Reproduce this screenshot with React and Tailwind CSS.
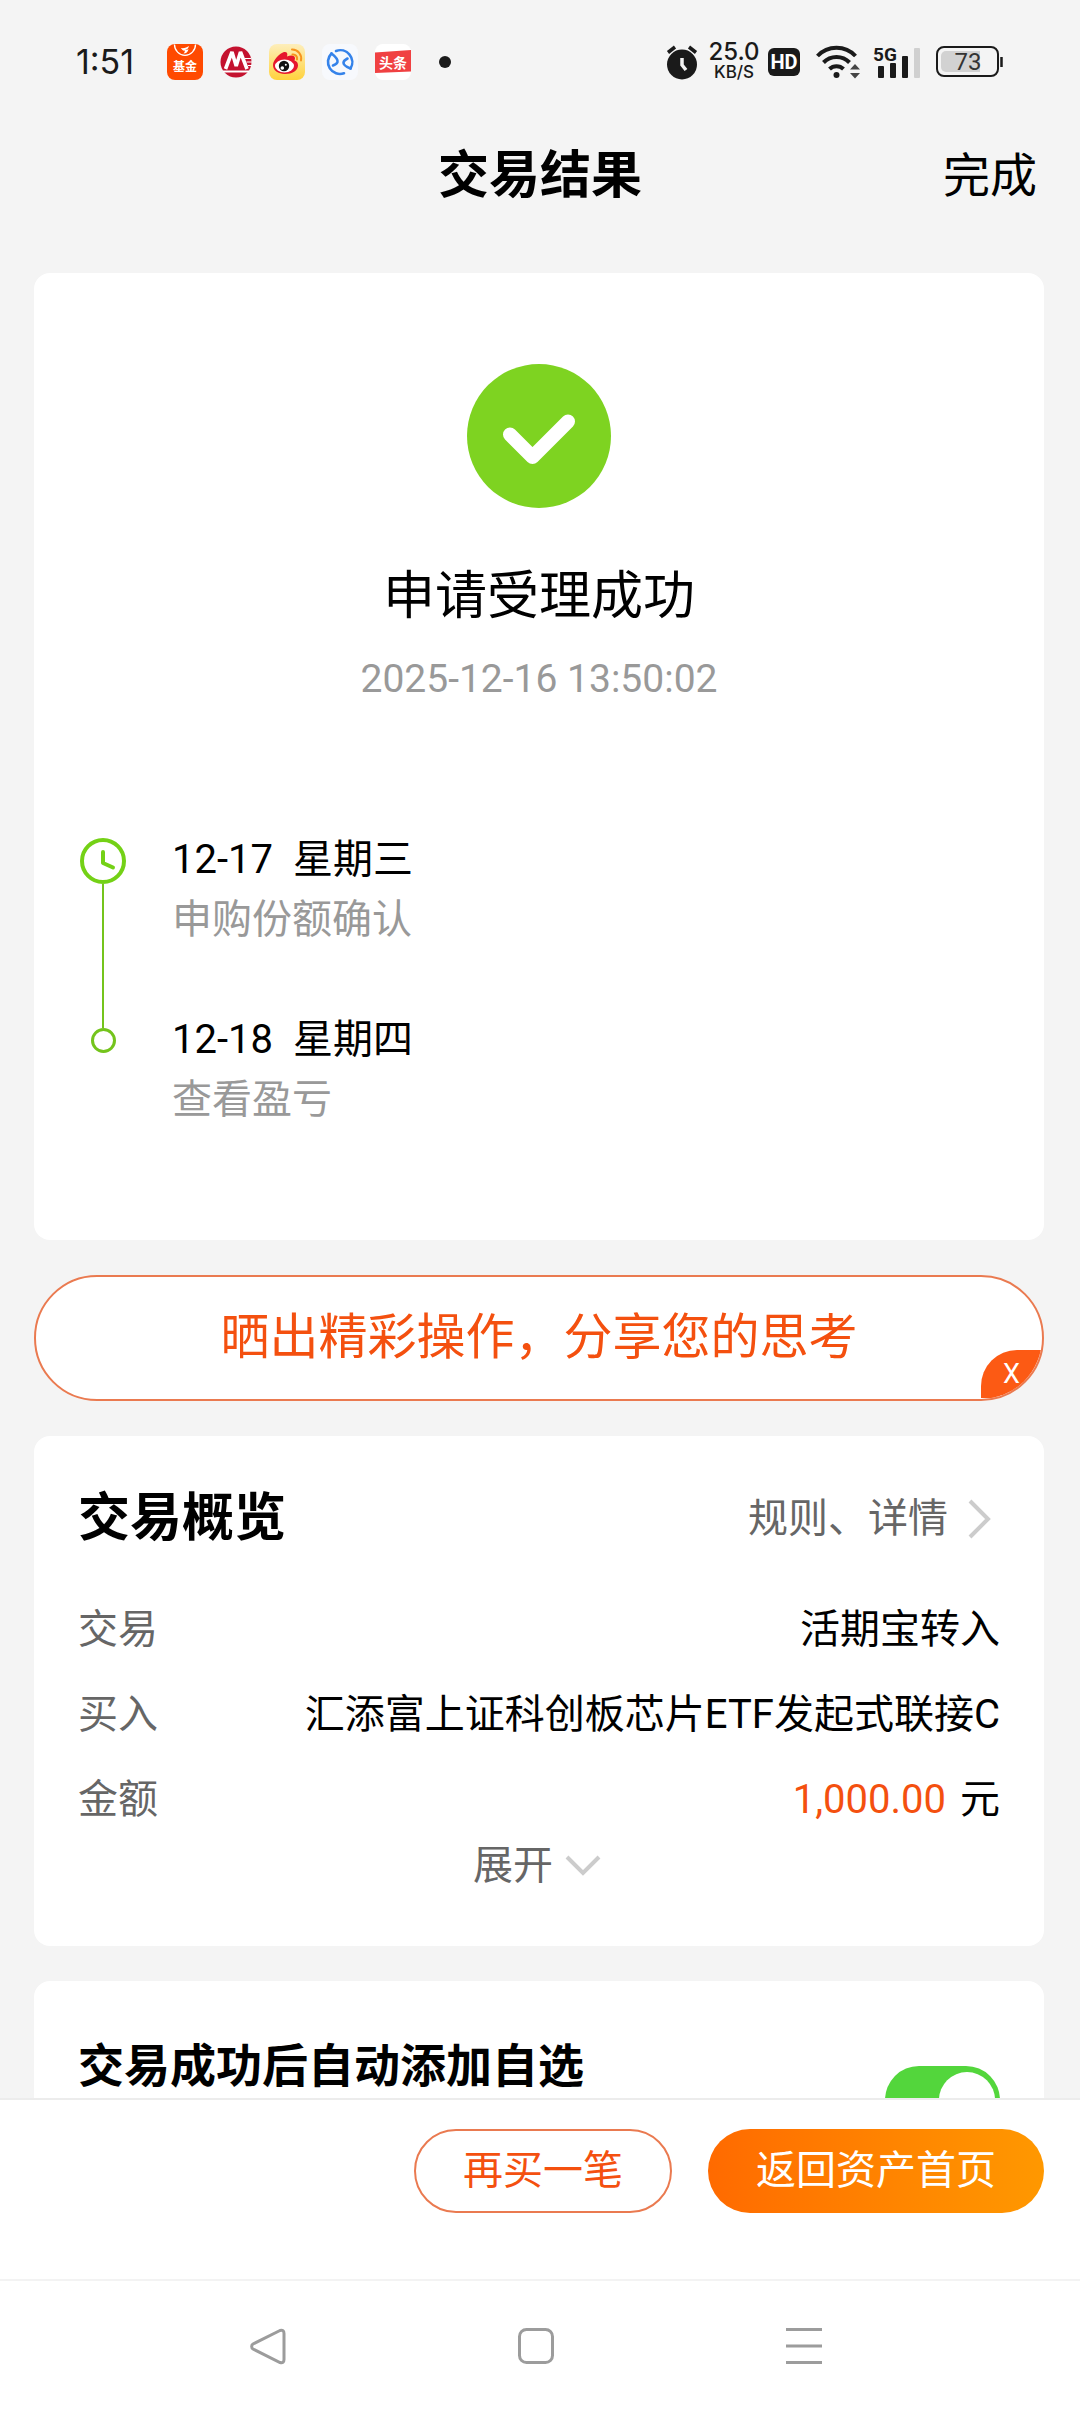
import { useState } from "react"

const FONT = "font-[Roboto,'Noto_Sans_CJK_SC',sans-serif]"

const steps = [
  { date: "12-17", weekday: "星期三", text: "申购份额确认" },
  { date: "12-18", weekday: "星期四", text: "查看盈亏" },
]

function FundAppIcon() {
  return (
    <svg className="size-9" viewBox="0 0 36 36">
      <rect width="36" height="36" rx="8" fill="#ff4a00" />
      <path d="M7.500 0.500a10.500 10.800 0 0 0 21 0" fill="none" stroke="#fff" strokeWidth="1.300" />
      <path d="M14 4c3 .5 6-.5 8-2-.5 2.500-2 3.500-4 4 2 0 3-.5 3.500-1-.5 3-2.500 4.500-5 4.500 1-1 1.500-2 1.500-3-1.500.5-3-.5-4-2.500z" fill="#fff" />
      <text x="18" y="27" textAnchor="middle" fontSize="12" fontWeight="700" fill="#fff">基金</text>
    </svg>
  )
}

function BankIcon() {
  return (
    <svg className="size-8" viewBox="0 0 32 32">
      <circle cx="16" cy="16" r="15.500" fill="#c4122f" />
      <path d="M5.500 23 12 6l4.200 14L20.500 6 27 23" fill="none" stroke="#fff" strokeWidth="3.600" strokeLinejoin="bevel" />
      <path d="M25 12.500h6M26.500 16h6M28 19.500h4" stroke="#fff" strokeWidth="1.200" />
      <path d="M3 25.500h26" stroke="#fff" strokeWidth="2" />
    </svg>
  )
}

function WeiboIcon() {
  return (
    <svg className="size-9" viewBox="0 0 36 36">
      <defs>
        <linearGradient id="weibo" x1="0" y1="0" x2="0" y2="1">
          <stop offset="0" stopColor="#fdeebb" />
          <stop offset="1" stopColor="#ffd23c" />
        </linearGradient>
      </defs>
      <rect width="36" height="36" rx="8" fill="url(#weibo)" />
      <path d="M4 21c0-5 7-12 11-13 3-.5 4 1.500 3 4.500 4-1.500 8-1.500 8 2l-.5 2c2.500.8 3.500 2.500 3.500 5 0 5-6 8.500-13 8.500S4 26.500 4 21z" fill="#e6162d" />
      <ellipse cx="15.500" cy="22" rx="9.500" ry="6.500" fill="#fff" />
      <circle cx="15" cy="22" r="5.200" fill="#111" />
      <circle cx="13.300" cy="24" r="1.800" fill="#fff" />
      <circle cx="16.800" cy="20.800" r="1" fill="#fff" />
      <path d="M23.500 10.500a4 4 0 0 1 4.500 5M23 5.500a9 9 0 0 1 9 11" fill="none" stroke="#f7941d" strokeWidth="2" strokeLinecap="round" />
    </svg>
  )
}

function ExchangeIcon() {
  return (
    <svg className="size-9" viewBox="0 0 36 36">
      <rect width="36" height="36" rx="8" fill="#f7f9fd" />
      <g fill="none" stroke="#3583ea" strokeWidth="2.600" strokeLinecap="round">
        <path d="M14 7A12 12 0 0 1 28.500 24.500M22 29.300A12 12 0 0 1 9.500 9.500" />
        <path d="M9.500 9.500c4.500 3.500 6.500 6.500 6 8.500-.4 1.500-2 2.500-4.500 3.500" />
        <path d="M28.500 24.500c-5-2-7.300-4-7-6 .3-1.500 1.800-2.800 4-4" />
      </g>
    </svg>
  )
}

function NewsIcon() {
  return (
    <svg className="size-9" viewBox="0 0 36 36">
      <rect width="36" height="36" rx="8" fill="#fff" />
      <path d="M0 8.500 36 6v21.500L0 29z" fill="#f04142" />
      <text x="18" y="23.500" textAnchor="middle" fontSize="14" fontWeight="700" fill="#fff">头条</text>
    </svg>
  )
}

function AlarmIcon() {
  return (
    <svg className="h-9 w-8" viewBox="0 0 32 36">
      <circle cx="16" cy="20.500" r="15" fill="#1a1a1a" />
      <path d="M2 8.500 9 3M30 8.500 23 3" stroke="#1a1a1a" strokeWidth="3.500" />
      <path d="M16 14v7l4 5" fill="none" stroke="#f4f4f4" strokeWidth="3.500" />
    </svg>
  )
}

function WifiIcon() {
  return (
    <svg className="h-9 w-11" viewBox="0 0 44 36">
      <g fill="none" stroke="#1a1a1a" strokeWidth="4">
        <path d="M1.500 12a26 26 0 0 1 38 0" />
        <path d="M7.500 18.500a18 18 0 0 1 26 0" />
        <path d="M13.500 25a10 10 0 0 1 14 0" />
      </g>
      <circle cx="20.500" cy="31" r="3" fill="#1a1a1a" />
      <path d="M34 25.500l5-5.500 5 5.500zM34 29l5 5.500 5-5.500z" fill="#444" />
    </svg>
  )
}

function SignalIcon() {
  return (
    <svg className="h-10 w-[50px]" viewBox="-2 -4 50 40">
      <text x="-2" y="15" fontSize="19" fontWeight="700" fill="#1a1a1a">5G</text>
      <g fill="#1a1a1a">
        <rect x="3" y="20" width="6" height="12" rx="1" />
        <rect x="15" y="17" width="6" height="15" rx="1" />
        <rect x="27" y="10" width="6" height="22" rx="1" />
      </g>
      <rect x="39" y="2" width="6" height="30" rx="1" fill="#d0d0d0" />
    </svg>
  )
}

function BatteryIcon() {
  return (
    <svg className="h-8 w-17" viewBox="0 0 68 32">
      <rect x="1" y="1" width="61" height="29" rx="7" fill="none" stroke="#1a1a1a" strokeWidth="2" />
      <path d="M10 5h34v21H10a5 5 0 0 1-5-5V10a5 5 0 0 1 5-5z" fill="#d2d2d2" />
      <path d="M65.500 11v10" stroke="#1a1a1a" strokeWidth="2.500" />
      <text x="32" y="24" textAnchor="middle" fontSize="24" fill="#333">73</text>
    </svg>
  )
}

function StatusBar() {
  return (
    <div className="flex h-[124px] shrink-0 items-center justify-between px-[76px] text-[#1a1a1a]">
      <div className="flex items-center">
        <span className="w-[91px] font-[Inter] text-[34px] leading-9">1:51</span>
        <div className="flex items-center gap-[17px]">
          <FundAppIcon />
          <BankIcon />
          <WeiboIcon />
          <ExchangeIcon />
          <NewsIcon />
        </div>
        <span className="ml-[28px] size-3 rounded-full bg-[#1a1a1a]" />
      </div>
      <div className="flex items-center">
        <AlarmIcon />
        <div className="ml-[10px] mr-2 flex w-[52px] flex-col items-center font-[Inter] font-medium">
          <span className="text-[24px] leading-5">25.0</span>
          <span className="text-[17px] leading-5">KB/S</span>
        </div>
        <span className="flex h-7 w-8 items-center justify-center rounded-md bg-[#1a1a1a] text-[20px] font-bold text-white">HD</span>
        <div className="ml-4 flex items-center gap-[13px]">
          <WifiIcon />
          <SignalIcon />
          <BatteryIcon />
        </div>
      </div>
    </div>
  )
}

function ClockIcon() {
  return (
    <svg className="size-[46px]" viewBox="0 0 46 46" fill="none" stroke="#74d116">
      <circle cx="23" cy="23" r="21" strokeWidth="4" />
      <path d="M23 14v11l10 4.500" strokeWidth="4" strokeLinecap="round" strokeLinejoin="round" />
    </svg>
  )
}

function ResultCard() {
  return (
    <section className="rounded-2xl bg-white px-[46px] pb-[110px] pt-[91px]">
      <div className="flex flex-col items-center">
        <svg className="size-36" viewBox="0 0 144 144">
          <circle cx="72" cy="72" r="72" fill="#7ed321" />
          <path d="M43 70.500 65.500 93 101 57.500" fill="none" stroke="#fff" strokeWidth="14" strokeLinecap="round" strokeLinejoin="round" />
        </svg>
        <h2 className="mt-[59px] text-[52px] leading-[60px]">申请受理成功</h2>
        <time className="mt-[28px] text-[39px] leading-[48px] text-[#999]">2025-12-16 13:50:02</time>
      </div>

      <div className="mt-[127px] flex">
        <div className="flex w-[46px] flex-col items-center pt-2">
          <ClockIcon />
          <span className="h-36 w-[2px] bg-[#74c41c]" />
          <span className="size-[25px] rounded-full border-3 border-[#74c41c]" />
        </div>
        <ol className="ml-[46px] flex flex-col gap-[60px]">
          {steps.map((step) => (
            <li key={step.date} className="text-[40px] leading-[60px]">
              <div className="flex gap-5">
                <span>{step.date}</span>
                <span>{step.weekday}</span>
              </div>
              <p className="text-[#999]">{step.text}</p>
            </li>
          ))}
        </ol>
      </div>
    </section>
  )
}

function ShareBanner({ onClose }) {
  return (
    <div className="relative overflow-hidden rounded-full border-2 border-[#ea7a50] bg-white">
      <button type="button" className="block h-[122px] w-full text-[49px] text-[#f4500f]">
        晒出精彩操作，分享您的思考
      </button>
      <button
        type="button"
        onClick={onClose}
        className="absolute bottom-px right-0 h-12 w-[61px] rounded-tl-[36px] bg-[#fc5a14] text-[27px] text-white"
      >
        X
      </button>
    </div>
  )
}

function OverviewRow({ label, children }) {
  return (
    <div className="flex justify-between">
      <dt className="text-[#666]">{label}</dt>
      <dd>{children}</dd>
    </div>
  )
}

function OverviewCard() {
  return (
    <section className="rounded-2xl bg-white px-11 pb-[50px] pt-[53px] text-[40px] leading-[60px]">
      <div className="flex items-center justify-between">
        <h2 className="text-[52px] font-bold">交易概览</h2>
        <a href="#detail" className="flex items-center gap-5 pr-2 text-[#666]">
          规则、详情
          <svg className="h-10 w-6" viewBox="0 0 24 40" fill="none" stroke="#ccc" strokeWidth="4">
            <path d="M2 2 20 20 2 38" />
          </svg>
        </a>
      </div>

      <dl className="mt-[51px] flex flex-col gap-[25px]">
        <OverviewRow label="交易">活期宝转入</OverviewRow>
        <OverviewRow label="买入">汇添富上证科创板芯片ETF发起式联接C</OverviewRow>
        <OverviewRow label="金额">
          <span className="mr-[14px] text-[#f4500f]">1,000.00</span>元
        </OverviewRow>
      </dl>

      <button type="button" className="mx-auto mt-[6px] flex items-center gap-3 pr-1 text-[#666]">
        展开
        <svg className="h-6 w-9" viewBox="0 0 36 24" fill="none" stroke="#ccc" strokeWidth="4">
          <path d="M2 3 18 19 34 3" />
        </svg>
      </button>
    </section>
  )
}

function WatchlistCard() {
  const [checked, setChecked] = useState(true)

  return (
    <section className="flex items-start justify-between rounded-2xl bg-white px-11 pb-[60px] pt-[55px]">
      <label htmlFor="watchlist" className="text-[46px] font-bold leading-[60px]">
        交易成功后自动添加自选
      </label>
      <input
        id="watchlist"
        type="checkbox"
        checked={checked}
        onChange={(e) => setChecked(e.target.checked)}
        className="mt-[30px] flex h-[68px] w-[115px] appearance-none items-center rounded-full bg-[#ddd] px-[5px] before:size-[56px] before:rounded-full before:bg-white checked:justify-end checked:bg-[#53d63c]"
      />
    </section>
  )
}

function ActionBar() {
  return (
    <div className="flex justify-end gap-9 border-t-2 border-[#ececec] bg-white px-9 pb-[66px] pt-[29px] text-[40px]">
      <button type="button" className="h-[84px] rounded-full border-2 border-[#ea7a50] px-[47px] text-[#f4500f]">
        再买一笔
      </button>
      <button type="button" className="h-[84px] rounded-full bg-linear-to-r from-[#ff6a00] to-[#ff9800] px-12 text-white">
        返回资产首页
      </button>
    </div>
  )
}

function SystemNav() {
  return (
    <nav className="flex h-[133px] items-start justify-between border-t-2 border-[#f3f3f3] bg-white pl-[249px] pr-[257px] pt-[46px]">
      <button type="button" aria-label="返回">
        <svg className="size-[38px]" viewBox="0 0 38 38" fill="none" stroke="#9c9c9c" strokeWidth="3">
          <path d="M31 3.500 4 17a3 3 0 0 0 0 5L31 35.500q4 1 4-3v-26q0-4-4-3z" />
        </svg>
      </button>
      <button type="button" aria-label="主页">
        <svg className="size-[38px]" viewBox="0 0 38 38" fill="none" stroke="#9c9c9c" strokeWidth="3">
          <rect x="2.500" y="2.500" width="33" height="33" rx="7" />
        </svg>
      </button>
      <button type="button" aria-label="最近任务">
        <svg className="size-[38px]" viewBox="0 0 38 38" fill="none" stroke="#9c9c9c" strokeWidth="3">
          <path d="M1 2.500h36M1 19h36M1 35.500h36" />
        </svg>
      </button>
    </nav>
  )
}

export default function App() {
  const [showShare, setShowShare] = useState(true)

  return (
    <div className={`flex h-screen flex-col bg-[#f4f4f4] text-black ${FONT}`}>
      <StatusBar />

      {/* Header */}
      <header className="grid h-[104px] shrink-0 grid-cols-3 items-center px-[43px]">
        <h1 className="col-start-2 text-center text-[51px] font-bold">交易结果</h1>
        <button type="button" className="justify-self-end text-[47px]">完成</button>
      </header>

      <main className="mt-[45px] flex min-h-0 flex-1 flex-col gap-[35px] overflow-y-auto pl-[34px] pr-9 [scrollbar-width:none] *:shrink-0">
        <ResultCard />
        {showShare && <ShareBanner onClose={() => setShowShare(false)} />}
        <OverviewCard />
        <WatchlistCard />
      </main>

      <footer className="shrink-0">
        <ActionBar />
        <SystemNav />
      </footer>
    </div>
  )
}
